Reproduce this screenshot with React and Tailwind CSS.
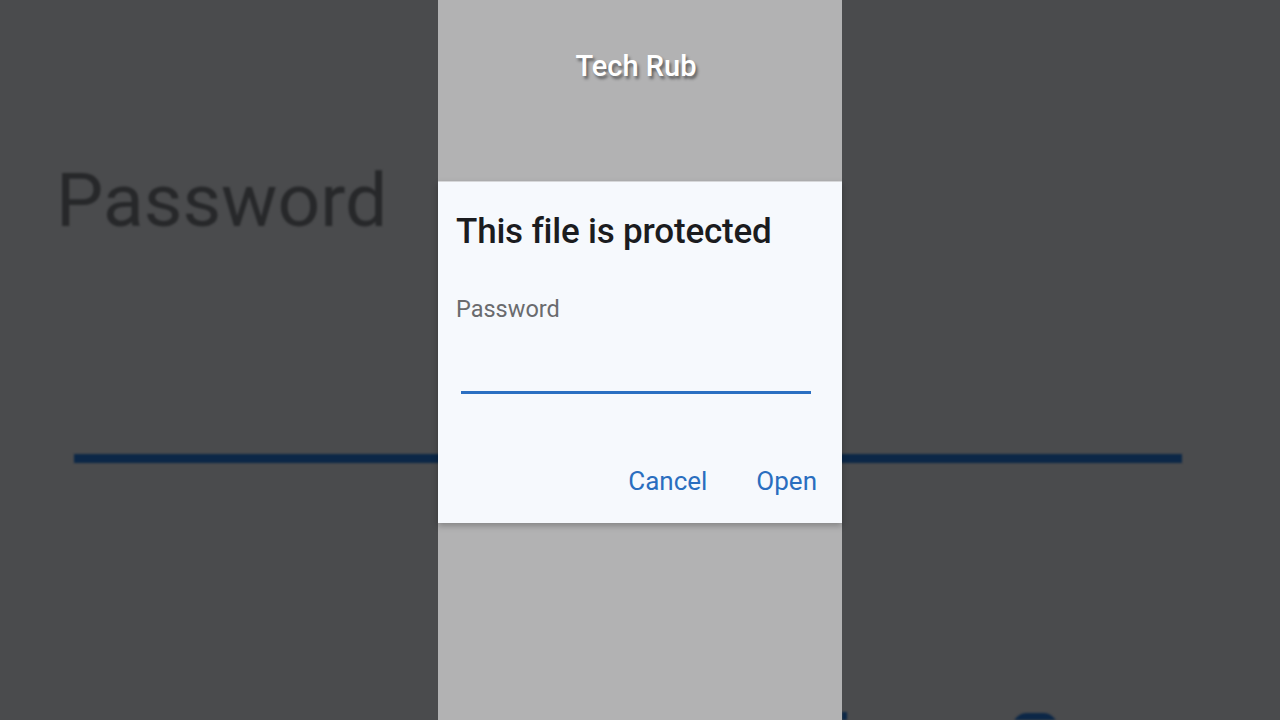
import React from "react";

// Fondo desenfocado: la misma pantalla ampliada detras de la columna
function FondoBorroso() {
  return (
    <div className="pointer-events-none absolute inset-0 overflow-hidden blur-[1px]">
      <p className="absolute left-[56px] top-[163px] text-[75px] leading-none text-[#27282a] [font-family:Roboto,'Noto_Sans',sans-serif]">
        Password
      </p>
      <div className="absolute left-[74px] top-[454px] h-[9px] w-[1108px] bg-[#0c2747]" />
      <div className="absolute left-[842px] top-[712px] h-[12px] w-[5px] bg-[#0c2747]" />
      <div className="absolute left-[1012px] top-[713px] h-[30px] w-[46px] rounded-full bg-[#0c2747]" />
    </div>
  );
}

export default function App() {
  return (
    <main className="relative flex h-[720px] w-[1280px] justify-center overflow-hidden bg-[#4a4b4d] [font-family:Roboto,'Noto_Sans',sans-serif]">
      <FondoBorroso />

      <section className="relative z-10 flex h-full w-[404px] flex-col bg-[#b2b2b3]">
        <div className="flex h-[181px] items-start justify-center pr-[8px] pt-[52px]">
          <h2 className="text-[29px] font-medium leading-none text-white [text-shadow:2px_3px_3px_rgba(0,0,0,0.45)]">
            Tech Rub
          </h2>
        </div>

        <div className="flex h-[342px] flex-col border-t border-[#d6d7d9] bg-[#f6f9fd] px-[18px] shadow-[0_3px_6px_rgba(0,0,0,0.25)]">
          <h1 className="mt-[32px] text-[35px] font-medium leading-none tracking-[-0.2px] text-[#1b1c1f]">
            This file is protected
          </h1>
          <label className="mt-[49px] text-[23.5px] leading-none text-[#6a6b6e]">Password</label>
          <div className="ml-[5px] mr-[13px] mt-[69px] h-[3px] bg-[#2b6fc2]" />
          <div className="mt-[74px] flex justify-end gap-[49px] pr-[7px]">
            <button className="text-[26px] leading-none text-[#2a6ebf]">Cancel</button>
            <button className="text-[26px] leading-none text-[#2a6ebf]">Open</button>
          </div>
        </div>

        <div className="flex-1" />
      </section>
    </main>
  );
}
